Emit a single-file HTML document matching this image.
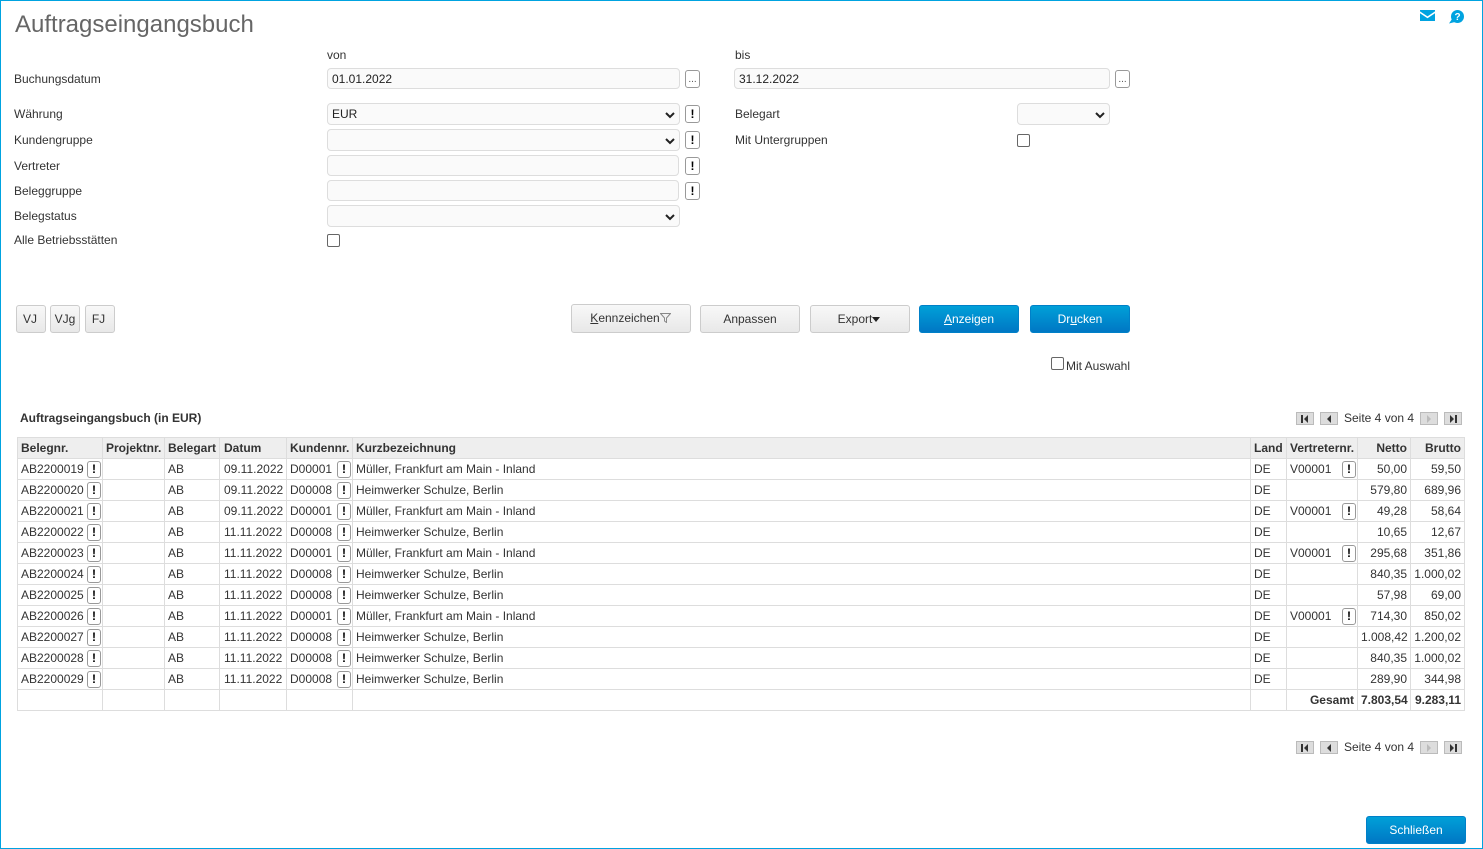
<!DOCTYPE html>
<html lang="de"><head><meta charset="utf-8"><title>Auftragseingangsbuch</title>
<style>
*{box-sizing:border-box}
html,body{margin:0;padding:0;background:#fff}
body{width:1483px;height:849px;position:relative;overflow:hidden;font:12px/14px "Liberation Sans",Arial,sans-serif;color:#333}
#frame{position:absolute;left:0;top:0;width:1483px;height:849px;border:1px solid #00a3e0;pointer-events:none;z-index:9}
.a{position:absolute;white-space:nowrap}
h1{position:absolute;margin:0;left:15px;top:11px;font:24px/28px "Liberation Sans",Arial,sans-serif;color:#666}
.f{position:absolute;height:22px;background:#fafafa;border:1px solid #ddd;border-radius:4px;padding:3px 4px;color:#222;line-height:14px}
.f svg{position:absolute;right:3px;top:7px}
.i{position:absolute;width:15px;height:18px;background:#fff;border:1px solid #999;border-radius:3px;font:bold 12px/16px "Liberation Sans",Arial,sans-serif;color:#000;text-align:center}
.d{position:absolute;width:15px;height:18px;background:#fff;border:1px solid #999;border-radius:3px;font:10px/18px "Liberation Sans",Arial,sans-serif;color:#555;text-align:center}
.c{position:absolute;width:13px;height:13px;background:#fff;border:1px solid #666;border-radius:2px}
.b{position:absolute;height:28px;border:1px solid #ccc;border-radius:3px;background:linear-gradient(#f8f8f8,#e8e8e8);text-align:center;line-height:26px;color:#333}
.p{background:linear-gradient(#00a0d8,#0077c4);border-color:#0080c8;color:#fff}
table{position:absolute;left:17px;top:437px;width:1448px;border-collapse:collapse;table-layout:fixed}
td,th{border:1px solid #ddd;height:21px;padding:0 3px;font-size:12px;line-height:14px;white-space:nowrap;overflow:visible;position:relative;color:#333;text-align:left;font-weight:normal}
th{background:#eee;font-weight:bold;letter-spacing:0;color:#333}
td:nth-child(4),th:nth-child(4){padding-left:4px}
.r{text-align:right}
td .x{position:absolute;top:2px;right:1px;width:14px;height:17px;border:1px solid #999;border-radius:3px;background:#fff;font:bold 12px/15px "Liberation Sans",Arial,sans-serif;color:#000;text-align:center}
.n{position:absolute;width:18px;height:13px;background:#ddd;border:1px solid #bbb}
.n svg{display:block;margin:2px auto 0}
</style></head><body>
<div id="frame"></div>
<h1>Auftragseingangsbuch</h1>
<svg class="a" style="left:1420px;top:10px" width="15" height="11" viewBox="0 0 17 12" preserveAspectRatio="none"><path d="M0 0H17V1.5L8.5 7 0 1.500Z M0 3.500 8.500 9 17 3.500V12H0Z" fill="#00a3e0"/></svg>
<svg class="a" style="left:1449px;top:10px" width="16" height="14" viewBox="0 0 16 14"><circle cx="8.500" cy="6.500" r="6.500" fill="#00a3e0"/><path d="M3 9 0 13.500 6 12Z" fill="#00a3e0"/><text x="8.500" y="10" font-size="10" font-weight="bold" font-family="Liberation Sans" text-anchor="middle" fill="#fff">?</text></svg>

<div class="a" style="left:327px;top:48px">von</div>
<div class="a" style="left:735px;top:48px">bis</div>
<div class="a" style="left:14px;top:72px">Buchungsdatum</div>
<div class="f" style="left:327px;top:68px;width:353px;height:21px">01.01.2022</div>
<div class="d" style="left:685px;top:70px">...</div>
<div class="f" style="left:734px;top:68px;width:376px;height:21px">31.12.2022</div>
<div class="d" style="left:1115px;top:70px">...</div>

<div class="a" style="left:14px;top:107px">Währung</div>
<div class="f" style="left:327px;top:103px;width:353px">EUR<svg width="12" height="8" viewBox="0 0 12 8"><path d="M2 2 6 6 10 2" fill="none" stroke="#222" stroke-width="2"/></svg></div>
<div class="i" style="left:685px;top:105px">!</div>
<div class="a" style="left:735px;top:107px">Belegart</div>
<div class="f" style="left:1017px;top:103px;width:93px"><svg width="12" height="8" viewBox="0 0 12 8"><path d="M2 2 6 6 10 2" fill="none" stroke="#222" stroke-width="2"/></svg></div>

<div class="a" style="left:14px;top:133px">Kundengruppe</div>
<div class="f" style="left:327px;top:129px;width:353px"><svg width="12" height="8" viewBox="0 0 12 8"><path d="M2 2 6 6 10 2" fill="none" stroke="#222" stroke-width="2"/></svg></div>
<div class="i" style="left:685px;top:131px">!</div>
<div class="a" style="left:735px;top:133px">Mit Untergruppen</div>
<div class="c" style="left:1017px;top:134px"></div>

<div class="a" style="left:14px;top:159px">Vertreter</div>
<div class="f" style="left:327px;top:155px;width:352px;height:21px"></div>
<div class="i" style="left:685px;top:157px">!</div>
<div class="a" style="left:14px;top:184px">Beleggruppe</div>
<div class="f" style="left:327px;top:180px;width:352px;height:21px"></div>
<div class="i" style="left:685px;top:182px">!</div>
<div class="a" style="left:14px;top:209px">Belegstatus</div>
<div class="f" style="left:327px;top:205px;width:353px"><svg width="12" height="8" viewBox="0 0 12 8"><path d="M2 2 6 6 10 2" fill="none" stroke="#222" stroke-width="2"/></svg></div>
<div class="a" style="left:14px;top:233px">Alle Betriebsstätten</div>
<div class="c" style="left:327px;top:234px"></div>

<div class="b" style="left:16px;top:305px;width:30px;padding-right:2px">VJ</div>
<div class="b" style="left:50px;top:305px;width:30px">VJg</div>
<div class="b" style="left:85px;top:305px;width:30px;padding-right:3px">FJ</div>
<div class="b" style="left:571px;top:304px;width:120px;height:29px;line-height:27px;padding-right:1px"><u>K</u>ennzeichen<svg width="11" height="10" viewBox="0 0 11 10" style="vertical-align:-1px"><path d="M.5.5H10.500L6.500 5V9.500L4.500 8V5Z" fill="none" stroke="#888"/></svg></div>
<div class="b" style="left:700px;top:305px;width:100px">Anpassen</div>
<div class="b" style="left:810px;top:305px;width:100px;padding-right:2px">Export<svg width="8" height="5" viewBox="0 0 8 5" style="vertical-align:1px"><path d="M0 0H8L4 5Z" fill="#222"/></svg></div>
<div class="b p" style="left:919px;top:305px;width:100px"><u>A</u>nzeigen</div>
<div class="b p" style="left:1030px;top:305px;width:100px">Dr<u>u</u>cken</div>
<div class="c" style="left:1051px;top:357px"></div>
<div class="a" style="left:1066px;top:359px">Mit Auswahl</div>

<div class="a" style="left:20px;top:411px;font-weight:bold">Auftragseingangsbuch (in EUR)</div>
<div class="n" style="left:1296px;top:412px"><svg width="10" height="8" viewBox="0 0 10 8"><path d="M1 0H3V8H1ZM8 0V8L4 4Z" fill="#333"/></svg></div>
<div class="n" style="left:1320px;top:412px"><svg width="10" height="8" viewBox="0 0 10 8"><path d="M7 0V8L3 4Z" fill="#333"/></svg></div>
<div class="a" style="left:1344px;top:411px">Seite 4 von 4</div>
<div class="n" style="left:1420px;top:412px"><svg width="10" height="8" viewBox="0 0 10 8"><path d="M3 0V8L7 4Z" fill="#bbb"/></svg></div>
<div class="n" style="left:1444px;top:412px"><svg width="10" height="8" viewBox="0 0 10 8"><path d="M2 0V8L6 4ZM7 0H9V8H7Z" fill="#333"/></svg></div>

<table>
<colgroup><col style="width:85px"><col style="width:62px"><col style="width:55px"><col style="width:67px"><col style="width:66px"><col style="width:898px"><col style="width:36px"><col style="width:71px"><col style="width:53px"><col style="width:54px"></colgroup>
<tr><th>Belegnr.</th><th>Projektnr.</th><th>Belegart</th><th>Datum</th><th>Kundennr.</th><th>Kurzbezeichnung</th><th>Land</th><th>Vertreternr.</th><th class="r">Netto</th><th class="r">Brutto</th></tr>
<tr><td>AB2200019<b class="x">!</b></td><td></td><td>AB</td><td>09.11.2022</td><td>D00001<b class="x">!</b></td><td>Müller, Frankfurt am Main - Inland</td><td>DE</td><td>V00001<b class="x">!</b></td><td class="r">50,00</td><td class="r">59,50</td></tr>
<tr><td>AB2200020<b class="x">!</b></td><td></td><td>AB</td><td>09.11.2022</td><td>D00008<b class="x">!</b></td><td>Heimwerker Schulze, Berlin</td><td>DE</td><td></td><td class="r">579,80</td><td class="r">689,96</td></tr>
<tr><td>AB2200021<b class="x">!</b></td><td></td><td>AB</td><td>09.11.2022</td><td>D00001<b class="x">!</b></td><td>Müller, Frankfurt am Main - Inland</td><td>DE</td><td>V00001<b class="x">!</b></td><td class="r">49,28</td><td class="r">58,64</td></tr>
<tr><td>AB2200022<b class="x">!</b></td><td></td><td>AB</td><td>11.11.2022</td><td>D00008<b class="x">!</b></td><td>Heimwerker Schulze, Berlin</td><td>DE</td><td></td><td class="r">10,65</td><td class="r">12,67</td></tr>
<tr><td>AB2200023<b class="x">!</b></td><td></td><td>AB</td><td>11.11.2022</td><td>D00001<b class="x">!</b></td><td>Müller, Frankfurt am Main - Inland</td><td>DE</td><td>V00001<b class="x">!</b></td><td class="r">295,68</td><td class="r">351,86</td></tr>
<tr><td>AB2200024<b class="x">!</b></td><td></td><td>AB</td><td>11.11.2022</td><td>D00008<b class="x">!</b></td><td>Heimwerker Schulze, Berlin</td><td>DE</td><td></td><td class="r">840,35</td><td class="r">1.000,02</td></tr>
<tr><td>AB2200025<b class="x">!</b></td><td></td><td>AB</td><td>11.11.2022</td><td>D00008<b class="x">!</b></td><td>Heimwerker Schulze, Berlin</td><td>DE</td><td></td><td class="r">57,98</td><td class="r">69,00</td></tr>
<tr><td>AB2200026<b class="x">!</b></td><td></td><td>AB</td><td>11.11.2022</td><td>D00001<b class="x">!</b></td><td>Müller, Frankfurt am Main - Inland</td><td>DE</td><td>V00001<b class="x">!</b></td><td class="r">714,30</td><td class="r">850,02</td></tr>
<tr><td>AB2200027<b class="x">!</b></td><td></td><td>AB</td><td>11.11.2022</td><td>D00008<b class="x">!</b></td><td>Heimwerker Schulze, Berlin</td><td>DE</td><td></td><td class="r">1.008,42</td><td class="r">1.200,02</td></tr>
<tr><td>AB2200028<b class="x">!</b></td><td></td><td>AB</td><td>11.11.2022</td><td>D00008<b class="x">!</b></td><td>Heimwerker Schulze, Berlin</td><td>DE</td><td></td><td class="r">840,35</td><td class="r">1.000,02</td></tr>
<tr><td>AB2200029<b class="x">!</b></td><td></td><td>AB</td><td>11.11.2022</td><td>D00008<b class="x">!</b></td><td>Heimwerker Schulze, Berlin</td><td>DE</td><td></td><td class="r">289,90</td><td class="r">344,98</td></tr>
<tr><td></td><td></td><td></td><td></td><td></td><td></td><td></td><td class="r" style="font-weight:bold">Gesamt</td><td class="r" style="font-weight:bold">7.803,54</td><td class="r" style="font-weight:bold">9.283,11</td></tr>
</table>

<div class="n" style="left:1296px;top:741px"><svg width="10" height="8" viewBox="0 0 10 8"><path d="M1 0H3V8H1ZM8 0V8L4 4Z" fill="#333"/></svg></div>
<div class="n" style="left:1320px;top:741px"><svg width="10" height="8" viewBox="0 0 10 8"><path d="M7 0V8L3 4Z" fill="#333"/></svg></div>
<div class="a" style="left:1344px;top:740px">Seite 4 von 4</div>
<div class="n" style="left:1420px;top:741px"><svg width="10" height="8" viewBox="0 0 10 8"><path d="M3 0V8L7 4Z" fill="#bbb"/></svg></div>
<div class="n" style="left:1444px;top:741px"><svg width="10" height="8" viewBox="0 0 10 8"><path d="M2 0V8L6 4ZM7 0H9V8H7Z" fill="#333"/></svg></div>

<div class="b p" style="left:1366px;top:816px;width:100px">Schließen</div>
</body></html>
